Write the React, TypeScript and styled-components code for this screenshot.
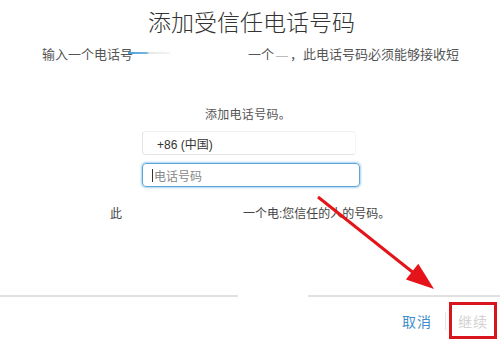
import styled, { createGlobalStyle } from "styled-components";

const GlobalStyle = createGlobalStyle`
  html, body {
    margin: 0;
    padding: 0;
    background: #fff;
  }
  body {
    font-family: "Liberation Sans", "Noto Sans CJK SC", sans-serif;
  }
`;

const Page = styled.div`
  position: relative;
  width: 500px;
  height: 340px;
  overflow: hidden;
  display: flex;
  flex-direction: column;
  background: #fff;
`;
const Title = styled.h1`
  margin: 7px 0 0;
  height: 32px;
  line-height: 32px;
  font-size: 23px;
  font-weight: 300;
  color: #333;
  text-align: center;
  padding-left: 3px;
`;
const Subtitle = styled.div`
  margin-top: 7px;
  padding-left: 42px;
  height: 18px;
  line-height: 18px;
  font-size: 13px;
  color: #555;
  display: flex;
  align-items: center;
  white-space: nowrap;
`;
const Smudge = styled.span<{ $w: number; $ml: number }>`
  display: inline-block;
  width: ${({ $w }) => $w}px;
  height: 2px;
  margin-left: ${({ $ml }) => $ml}px;
  margin-top: -4px;
  background: linear-gradient(to right, #4b9fd6 0, #7ab9e2 45%, #e6e6e6 50%, #f4f4f4 100%);
`;
const Dash = styled.span`
  display: inline-block;
  width: 12px;
  height: 1px;
  margin: 3px 2px 0;
  background: #bbb;
`;
const Spacer = styled.span<{ $w: number }>`
  display: inline-block;
  width: ${({ $w }) => $w}px;
`;
const AddLabel = styled.div`
  margin-top: 42px;
  height: 18px;
  line-height: 18px;
  font-size: 12px;
  color: #555;
  text-align: center;
  padding-right: 4px;
  letter-spacing: 0.3px;
`;
const Fields = styled.div`
  margin: 7px 0 0 142px;
  display: flex;
  flex-direction: column;
  gap: 8px;
`;
const CountryField = styled.div`
  box-sizing: border-box;
  width: 214px;
  height: 24px;
  border: 1px solid #e3e3e3;
  border-top-color: #f0f0f0;
  border-right-color: #f6f6f6;
  border-radius: 4px;
  padding-left: 14px;
  display: flex;
  align-items: center;
  font-size: 12px;
  color: #333;
`;
const PhoneField = styled.div`
  box-sizing: border-box;
  width: 218px;
  height: 24px;
  border: 1px solid #5ba7d9;
  border-radius: 4px;
  box-shadow: 0 0 2px 1px #a9d2ee;
  padding-left: 9px;
  display: flex;
  align-items: center;
  font-size: 12px;
  color: #888;
`;
const Caret = styled.span`
  display: inline-block;
  width: 1px;
  height: 13px;
  background: #333;
  margin-right: 1px;
`;
const Note = styled.div`
  margin-top: 18px;
  padding-left: 110px;
  height: 18px;
  line-height: 18px;
  font-size: 12px;
  color: #444;
  display: flex;
  white-space: nowrap;
`;
const Footer = styled.div`
  margin-top: auto;
`;
const Divider = styled.div`
  display: flex;
  gap: 70px;
  height: 2px;
`;
const DividerPart = styled.div<{ $w?: number }>`
  background: #e1e1e1;
  ${({ $w }) => ($w ? `width: ${$w}px;` : "flex: 1;")}
`;
const Actions = styled.div`
  box-sizing: border-box;
  height: 43px;
  padding: 5px 12px 0 0;
  display: flex;
  align-items: center;
  justify-content: flex-end;
`;
const ActionButton = styled.button<{ $disabled?: boolean }>`
  border: 0;
  background: none;
  padding: 0;
  font-family: inherit;
  font-size: 14px;
  letter-spacing: 1px;
  color: ${({ $disabled }) => ($disabled ? "#d2d2d2" : "#3f8ecb")};
  cursor: pointer;
`;
const Separator = styled.span`
  width: 1px;
  height: 18px;
  margin: 0 12px 0 13px;
  background: #e3e3e3;
`;
const Highlight = styled.div`
  position: absolute;
  left: 449px;
  top: 302px;
  width: 48px;
  height: 37px;
  box-sizing: border-box;
  border: 3px solid #d8141c;
`;
const ArrowLayer = styled.svg`
  position: absolute;
  left: 0;
  top: 0;
  pointer-events: none;
`;

const App = () => {
  return (
    <Page>
      <GlobalStyle />
      <Title>添加受信任电话号码</Title>
      <Subtitle>
        <span>输入一个电话号</span>
        <Smudge $w={42} $ml={-5} />
        <Spacer $w={78} />
        <span>一个</span>
        <Dash />
        <span>，此电话号码必须能够接收短</span>
      </Subtitle>
      <AddLabel>添加电话号码。</AddLabel>
      <Fields>
        <CountryField>+86 (中国)</CountryField>
        <PhoneField>
          <Caret />
          电话号码
        </PhoneField>
      </Fields>
      <Note>
        <span>此</span>
        <Spacer $w={121} />
        <span>一个电:您信任的人的号码。</span>
      </Note>
      <Footer>
        <Divider>
          <DividerPart $w={238} />
          <DividerPart />
        </Divider>
        <Actions>
          <ActionButton>取消</ActionButton>
          <Separator />
          <ActionButton $disabled>继续</ActionButton>
        </Actions>
      </Footer>
      <Highlight />
      <ArrowLayer width="500" height="340" viewBox="0 0 500 340">
        <line x1="318" y1="197" x2="420" y2="278" stroke="#e5141b" strokeWidth="3" />
        <polygon points="434,289 405.9,279.4 418.3,263.8" fill="#e5141b" />
      </ArrowLayer>
    </Page>
  );
};

export default App;
